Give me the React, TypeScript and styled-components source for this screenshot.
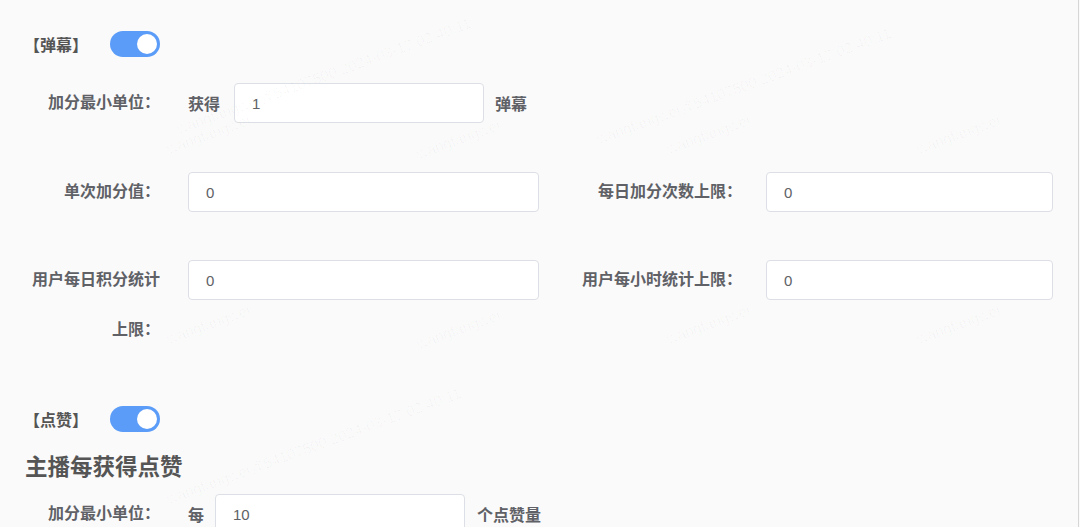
import styled, { createGlobalStyle } from 'styled-components';

const GlobalStyle = createGlobalStyle`
    html, body {
        margin: 0;
        padding: 0;
        background: #fafafa;
        font-family: "Liberation Sans", "Noto Sans CJK SC", sans-serif;
    }
`;

const Page = styled.div`
    position: relative;
    width: 1079px;
    height: 527px;
    overflow: hidden;
    box-sizing: border-box;
    border-right: 1px solid #d6d6d6;
    padding-top: 31px;
`;

const SectionHeader = styled.div<{ $top?: number }>`
    display: flex;
    align-items: center;
    gap: 22px;
    padding-left: 24px;
    margin-top: ${({ $top }) => $top ?? 0}px;
    height: 26px;
`;

const Tag = styled.span`
    font-size: 16px;
    font-weight: 700;
    color: #555;
`;

const Switch = styled.span<{ $on: boolean }>`
    position: relative;
    width: 50px;
    height: 26px;
    border-radius: 13px;
    background: ${({ $on }) => ($on ? '#5a9cf8' : '#dcdfe6')};

    &::after {
        content: '';
        position: absolute;
        top: 3px;
        left: ${({ $on }) => ($on ? '27px' : '3px')};
        width: 20px;
        height: 20px;
        border-radius: 50%;
        background: #fff;
    }
`;

const InlineRow = styled.div<{ $top: number }>`
    display: flex;
    align-items: center;
    margin-top: ${({ $top }) => $top}px;
    height: 40px;
`;

const Label = styled.label`
    box-sizing: border-box;
    width: 160px;
    padding-left: 20px;
    margin-right: 28px;
    flex: none;
    text-align: right;
    font-size: 16px;
    font-weight: 600;
    color: #5f6166;
    line-height: 50px;
    margin-top: -5px;
    margin-bottom: -5px;
`;

const Affix = styled.span<{ $gap: number }>`
    font-size: 16px;
    font-weight: 600;
    color: #5f6166;
    margin-right: ${({ $gap }) => $gap}px;
`;

const Input = styled.div<{ $width?: number }>`
    box-sizing: border-box;
    flex: ${({ $width }) => ($width ? 'none' : '1')};
    width: ${({ $width }) => ($width ? `${$width}px` : 'auto')};
    height: 40px;
    border: 1px solid #dcdfe6;
    border-radius: 4px;
    background: #fff;
    padding-left: 17px;
    display: flex;
    align-items: center;
    font-size: 15px;
    color: #606266;
`;

const Grid = styled.div`
    display: grid;
    grid-template-columns: 540px 1fr;
    row-gap: 48px;
    margin-top: 49px;
    padding-right: 25px;
`;

const FormItem = styled.div<{ $labelWidth?: number }>`
    display: flex;
    align-items: flex-start;

    ${Label} {
        width: ${({ $labelWidth }) => $labelWidth ?? 160}px;
        margin-right: ${({ $labelWidth }) => ($labelWidth ? 226 - $labelWidth : 28)}px;
    }
`;

const LeftItem = styled(FormItem)`
    padding-right: 1px;
`;

const Heading = styled.h2`
    margin: 21px 0 0;
    padding-left: 25px;
    font-size: 22.5px;
    line-height: 30px;
    font-weight: 700;
    color: #555;
`;

const Watermark = styled.div`
    position: absolute;
    inset: 0;
    pointer-events: none;

    span {
        position: absolute;
        white-space: nowrap;
        font-family: "Liberation Sans", sans-serif;
        font-size: 15px;
        color: rgba(0, 0, 0, 0.03);
        transform: rotate(-20deg);
        transform-origin: left bottom;
    }
`;

// watermark tiles, page coordinates
const names = [
    [170, 140], [420, 145], [670, 140], [920, 140],
    [170, 330], [420, 335], [670, 330], [920, 330],
];
const stamps = [[600, 130], [180, 120], [170, 490]];

const rows = [
    { left: '单次加分值：', right: '每日加分次数上限：' },
    { left: '用户每日积分统计上限：', right: '用户每小时统计上限：' },
];

export default function App() {
    return (
        <Page>
            <GlobalStyle />
            <SectionHeader>
                <Tag>【弹幕】</Tag>
                <Switch $on />
            </SectionHeader>
            <InlineRow $top={26}>
                <Label>加分最小单位：</Label>
                <Affix $gap={14}>获得</Affix>
                <Input $width={250}>1</Input>
                <Affix $gap={0} style={{ marginLeft: 11 }}>弹幕</Affix>
            </InlineRow>
            <Grid>
                {rows.map((r) => (
                    <>
                        <LeftItem key={r.left}>
                            <Label>{r.left}</Label>
                            <Input>0</Input>
                        </LeftItem>
                        <FormItem key={r.right} $labelWidth={202}>
                            <Label>{r.right}</Label>
                            <Input>0</Input>
                        </FormItem>
                    </>
                ))}
            </Grid>
            <SectionHeader $top={56}>
                <Tag>【点赞】</Tag>
                <Switch $on />
            </SectionHeader>
            <Heading>主播每获得点赞</Heading>
            <InlineRow $top={11}>
                <Label>加分最小单位：</Label>
                <Affix $gap={11}>每</Affix>
                <Input $width={250}>10</Input>
                <Affix $gap={0} style={{ marginLeft: 12 }}>个点赞量</Affix>
            </InlineRow>
            <Watermark>
                {names.map(([x, y]) => (
                    <span key={`n${x}-${y}`} style={{ left: x, top: y }}>wangfangwei</span>
                ))}
                {stamps.map(([x, y]) => (
                    <span key={`s${x}-${y}`} style={{ left: x, top: y }}>wangfangwei@54107500 2024-03-17 02:40:11</span>
                ))}
            </Watermark>
        </Page>
    );
}
